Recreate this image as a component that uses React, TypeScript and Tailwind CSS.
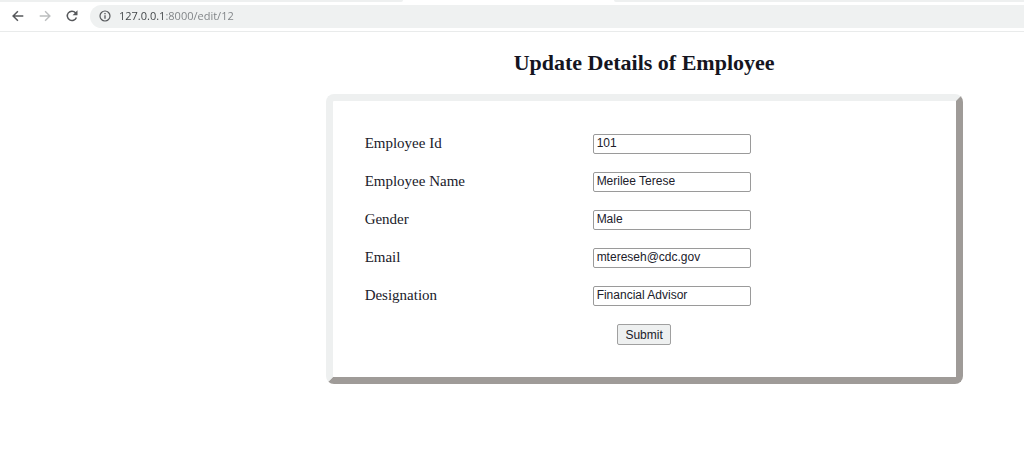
import { useState } from "react";

const fields = [
  { id: "eid", label: "Employee Id", value: "101" },
  { id: "ename", label: "Employee Name", value: "Merilee Terese" },
  { id: "gender", label: "Gender", value: "Male" },
  { id: "email", label: "Email", value: "mtereseh@cdc.gov" },
  { id: "designation", label: "Designation", value: "Financial Advisor" },
];

function BrowserBar() {
  const [url, setUrl] = useState("127.0.0.1:8000/edit/12");
  return (
    <header className="border-b border-[#e9ebeb] bg-white">
      <div className="flex h-0.5 justify-between">
        <span className="w-[39.4%] rounded-br bg-[#eef0f0]" />
        <span className="w-[40%] rounded-bl bg-[#eef0f0]" />
      </div>
      <nav className="flex h-[29px] items-center pb-px pl-[11px]">
        <button type="button" aria-label="Back" className="mr-[13px] text-[#56585b]">
          <svg className="size-3.5" viewBox="0 0 14 14" fill="none" stroke="currentColor" strokeWidth="1.5">
            <path d="M12.3 7H2.4M6.9 2.2 2.1 7l4.8 4.8" />
          </svg>
        </button>
        <button type="button" aria-label="Forward" className="mr-[13px] text-[#bcbebf]">
          <svg className="size-3.5" viewBox="0 0 14 14" fill="none" stroke="currentColor" strokeWidth="1.4">
            <path d="M1.7 7h9.9M7.1 2.2 11.9 7l-4.8 4.8" />
          </svg>
        </button>
        <button type="button" aria-label="Reload" className="mr-[11px] text-[#56585b]">
          <svg className="size-3.5" viewBox="0 0 14 14" fill="none" stroke="currentColor" strokeWidth="1.5">
            <path d="M11.4 8.5A4.7 4.7 0 1 1 10.5 3.7L11.5 4.8" />
            <path d="M12.5 1.3v4.9H7.6z" fill="currentColor" stroke="none" />
          </svg>
        </button>
        <div className="flex h-[23px] flex-1 items-center rounded-l-full bg-[#eff1f1] pl-[9px]">
          <svg className="size-3 text-[#56585b]" viewBox="0 0 12 12" fill="none" stroke="currentColor" strokeWidth="1.2" aria-hidden="true">
            <circle cx="6" cy="6" r="5" />
            <path d="M6 5.3v3.5M6 3v1.3" strokeWidth="1.3" />
          </svg>
          <input
            aria-label="Address"
            value={url}
            onChange={(e) => setUrl(e.target.value)}
            className="ml-2 min-w-0 flex-1 bg-linear-to-r from-[#3c4043] from-[46px] to-[#7c8083] to-[46px] bg-clip-text font-['Open_Sans',sans-serif] text-[11px] leading-4 text-transparent outline-none"
          />
        </div>
      </nav>
    </header>
  );
}

export default function App() {
  return (
    <div className="bg-white font-['Liberation_Serif',serif] text-[#20202a]">
      <BrowserBar />
      <main className="ml-[31.8%] w-[62.2%] pt-[17px]">
        <h1 className="text-center text-[22px] leading-7 font-bold text-[#15151f]">Update Details of Employee</h1>
        <form
          onSubmit={(e) => e.preventDefault()}
          className="mt-[17px] flex flex-col gap-[17px] rounded-lg border-7 border-t-[#eef0f0] border-r-[#9f9b98] border-b-[#9f9b98] border-l-[#eef0f0] px-8 pt-[33px] pb-8"
        >
          {fields.map((f) => (
            <div key={f.id} className="flex h-[21px] items-start">
              <label htmlFor={f.id} className="w-[228px] text-[15px] leading-[18px]">
                {f.label}
              </label>
              <input
                id={f.id}
                name={f.id}
                defaultValue={f.value}
                className="h-5 w-[158px] rounded-xs border border-[#9a9a9a] bg-white px-[3px] pb-0.5 font-['Liberation_Sans',sans-serif] text-xs leading-4"
              />
            </div>
          ))}
          <button
            type="submit"
            className="h-[21px] w-[54px] self-center rounded-xs border border-[#a0a0a0] bg-[#eef0f0] text-center font-['Liberation_Sans',sans-serif] text-xs"
          >
            Submit
          </button>
        </form>
      </main>
    </div>
  );
}
